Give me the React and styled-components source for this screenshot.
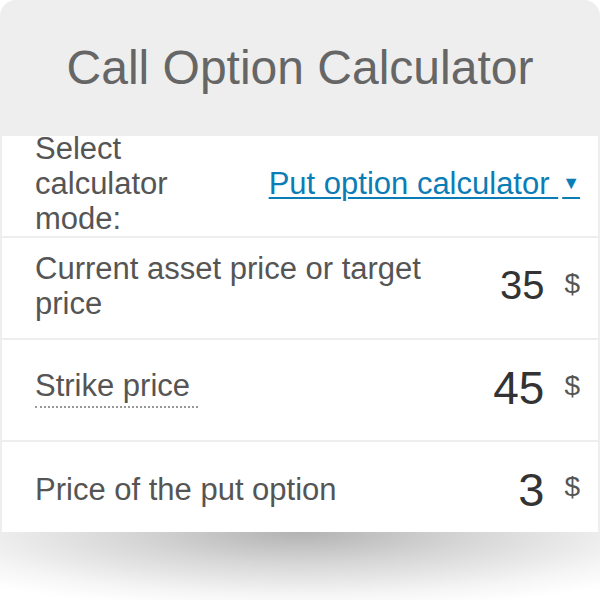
import React from 'react';
import styled, { createGlobalStyle } from 'styled-components';

const GlobalStyle = createGlobalStyle`
  body {
    margin: 0;
    background: #ffffff;
    font-family: 'Liberation Sans', Arial, sans-serif;
  }
`;

const Frame = styled.div`
  position: relative;
  width: 600px;
  height: 600px;

  &::after {
    content: '';
    position: absolute;
    left: 0;
    right: 0;
    top: 532px;
    height: 68px;
    background: radial-gradient(
      ellipse 72% 115% at 50% 0%,
      rgba(0, 0, 0, 0.3) 0%,
      rgba(0, 0, 0, 0.16) 40%,
      rgba(0, 0, 0, 0.04) 80%,
      rgba(0, 0, 0, 0) 100%
    );
  }
`;

const Card = styled.div`
  width: 600px;
  height: 532px;
  overflow: hidden;
  background: #eeeeee;
  border-radius: 16px 16px 0 0;
  display: flex;
  flex-direction: column;
  gap: 2px;
  padding: 0 2px;
  box-sizing: border-box;
`;

const Header = styled.h1`
  margin: 0 -2px;
  height: 134px;
  flex-shrink: 0;
  display: flex;
  align-items: center;
  justify-content: center;
  font-weight: 400;
  font-size: 48px;
  color: #666666;
`;

const Row = styled.div`
  flex-shrink: 0;
  height: 100px;
  background: #ffffff;
  display: flex;
  align-items: center;
  justify-content: space-between;
  padding: 0 18px 5px 33px;
  box-sizing: border-box;
`;

const Label = styled.span`
  font-size: 31px;
  line-height: 35px;
  color: #555555;
  max-width: ${(p) => p.$max || 'none'};
  border-bottom: ${(p) => (p.$dotted ? '2px dotted #999' : 'none')};
  padding: ${(p) => (p.$dotted ? '0 8px 3px 0' : '0')};
`;

const Select = styled.span`
  font-size: 31px;
  color: #0b7db6;
  text-decoration: underline;
  text-underline-offset: 3px;
  text-decoration-thickness: 2px;
  white-space: pre;
`;

const Caret = styled.span`
  font-size: 18px;
  margin-left: 4px;
  vertical-align: 5px;
`;

const Value = styled.div`
  display: flex;
  align-items: baseline;
  gap: 20px;
`;

const Number = styled.span`
  font-size: ${(p) => p.$size || 40}px;
  color: #333333;
`;

const Unit = styled.span`
  font-size: 28px;
  color: #555555;
  position: relative;
  top: ${(p) => p.$lift || -6}px;
`;

const fields = [
  { label: 'Current asset price or target price', value: '35', size: 40, max: '420px', lift: -6 },
  { label: 'Strike price', value: '45', size: 46, dotted: true, lift: -9 },
  { label: 'Price of the put option', value: '3', size: 47, lift: -10 },
];

export default function App() {
  return (
    <>
      <GlobalStyle />
      <Frame>
        <Card>
          <Header>Call Option Calculator</Header>
          <Row>
            <Label $max="170px">Select calculator mode:</Label>
            <Select>
              Put option calculator <Caret>▼</Caret>
            </Select>
          </Row>
          {fields.map((f) => (
            <Row key={f.label}>
              <Label $max={f.max} $dotted={f.dotted}>
                {f.label}
              </Label>
              <Value>
                <Number $size={f.size}>{f.value}</Number>
                <Unit $lift={f.lift}>$</Unit>
              </Value>
            </Row>
          ))}
        </Card>
      </Frame>
    </>
  );
}
